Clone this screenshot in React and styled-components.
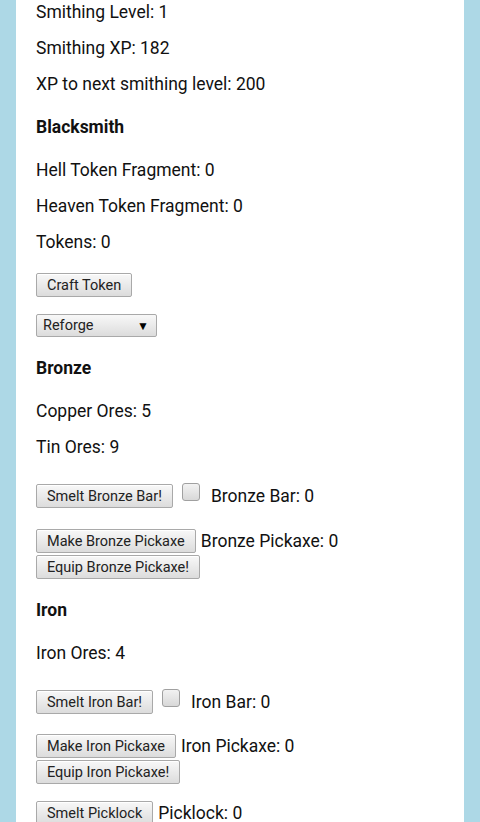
import React from 'react';
import styled, { createGlobalStyle } from 'styled-components';

const GlobalStyle = createGlobalStyle`
  html, body {
    margin: 0;
    padding: 0;
    background-color: #add8e6;
    font-family: Roboto, "Liberation Sans", Arial, sans-serif;
    color: #111;
  }
`;

const Panel = styled.div`
  margin: 0 16px;
  min-height: 822px;
  background-color: #fff;
  padding: 2px 20px 0;
  overflow: hidden;
`;

const Stat = styled.p`
  margin: ${p => p.$top ?? 16}px 0 0;
  font-size: 17.5px;
  line-height: 20px;
`;

const Heading = styled.h4`
  margin: ${p => p.$top ?? 23}px 0 0;
  font-size: 17.5px;
  line-height: 20px;
  font-weight: 700;
`;

const Row = styled.div`
  margin-top: ${p => p.$top ?? 16}px;
  display: flex;
  align-items: center;
  font-size: 17.5px;
  line-height: 20px;
`;

const Button = styled.button`
  font-family: Roboto, "Liberation Sans", Arial, sans-serif;
  font-size: 14.5px;
  color: #222;
  height: 24px;
  padding: 0 10px;
  background: linear-gradient(#f8f8f8, #dcdcdc);
  border: 1px solid #a9a9a9;
  border-radius: 2px;
  box-shadow: inset 0 1px 0 #fff;
`;

const Stack = styled.div`
  margin-top: ${p => p.$top ?? 16}px;
  display: flex;
  flex-direction: column;
  align-items: flex-start;
  gap: 2px;
`;

const Select = styled.div`
  margin-top: 17px;
  width: 121px;
  height: 23px;
  box-sizing: border-box;
  display: flex;
  align-items: center;
  justify-content: space-between;
  padding: 0 7px 0 6px;
  font-size: 14.5px;
  color: #222;
  background: linear-gradient(#f8f8f8, #dcdcdc);
  border: 1px solid #a9a9a9;
  border-radius: 2px;
  span:last-child {
    font-size: 12px;
    color: #000;
  }
`;

const Check = styled.span`
  display: inline-block;
  width: 16px;
  height: 16px;
  margin: -9px 11px 0 9px;
  border: 1px solid #a0a0a0;
  border-radius: 3px;
  background: linear-gradient(#f2f2f2, #d8d8d8);
`;

const Label = styled.span`
  margin-left: ${p => p.$gap ?? 5}px;
`;

export default function App() {
  return (
    <>
      <GlobalStyle />
      <Panel>
        <Stat $top={0}>Smithing Level: 1</Stat>
        <Stat>Smithing XP: 182</Stat>
        <Stat>XP to next smithing level: 200</Stat>

        <Heading>Blacksmith</Heading>
        <Stat $top={23}>Hell Token Fragment: 0</Stat>
        <Stat>Heaven Token Fragment: 0</Stat>
        <Stat>Tokens: 0</Stat>
        <Row $top={21}>
          <Button>Craft Token</Button>
        </Row>
        <Select>
          <span>Reforge</span>
          <span>▼</span>
        </Select>

        <Heading $top={21}>Bronze</Heading>
        <Stat $top={23}>Copper Ores: 5</Stat>
        <Stat>Tin Ores: 9</Stat>
        <Row $top={27}>
          <Button>Smelt Bronze Bar!</Button>
          <Check />
          <Label $gap={0}>Bronze Bar: 0</Label>
        </Row>
        <Stack $top={21}>
          <Row $top={0}>
            <Button>Make Bronze Pickaxe</Button>
            <Label>Bronze Pickaxe: 0</Label>
          </Row>
          <Button>Equip Bronze Pickaxe!</Button>
        </Stack>

        <Heading $top={21}>Iron</Heading>
        <Stat $top={23}>Iron Ores: 4</Stat>
        <Row $top={27}>
          <Button>Smelt Iron Bar!</Button>
          <Check />
          <Label $gap={0}>Iron Bar: 0</Label>
        </Row>
        <Stack $top={20}>
          <Row $top={0}>
            <Button>Make Iron Pickaxe</Button>
            <Label>Iron Pickaxe: 0</Label>
          </Row>
          <Button>Equip Iron Pickaxe!</Button>
        </Stack>
        <Row $top={17}>
          <Button>Smelt Picklock</Button>
          <Label>Picklock: 0</Label>
        </Row>
      </Panel>
    </>
  );
}
